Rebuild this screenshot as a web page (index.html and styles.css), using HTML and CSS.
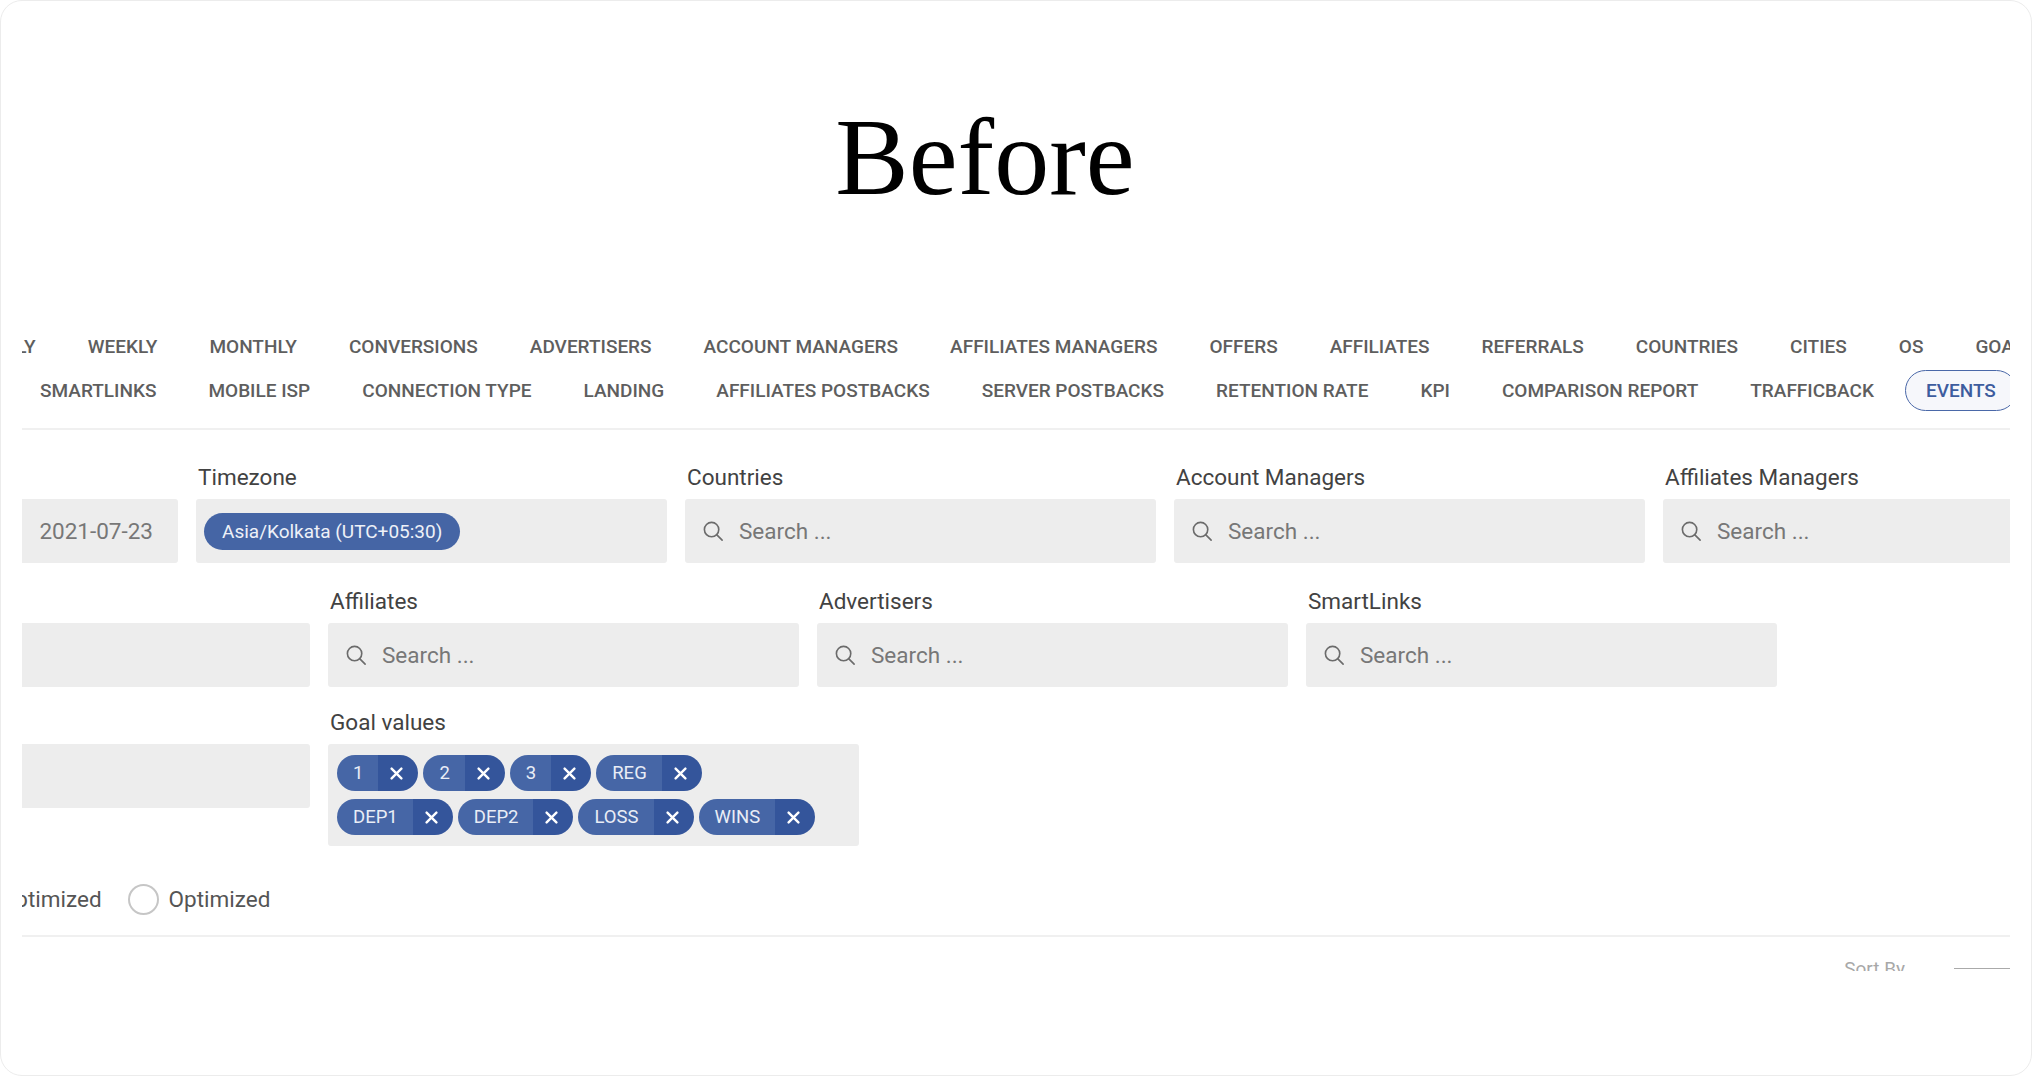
FILE: index.html
```html
<!DOCTYPE html>
<html lang="en">
<head>
<meta charset="utf-8">
<title>Before</title>
<link rel="stylesheet" href="styles.css">
</head>
<body>
<div class="card">
  <h1 class="title">Before</h1>
  <div class="shot">
    <nav class="tabs">
      <div class="tab-row tab-row-1">
        <span class="tab">DAILY</span>
        <span class="tab">WEEKLY</span>
        <span class="tab">MONTHLY</span>
        <span class="tab">CONVERSIONS</span>
        <span class="tab">ADVERTISERS</span>
        <span class="tab">ACCOUNT MANAGERS</span>
        <span class="tab">AFFILIATES MANAGERS</span>
        <span class="tab">OFFERS</span>
        <span class="tab">AFFILIATES</span>
        <span class="tab">REFERRALS</span>
        <span class="tab">COUNTRIES</span>
        <span class="tab">CITIES</span>
        <span class="tab">OS</span>
        <span class="tab">GOALS</span>
      </div>
      <div class="tab-row tab-row-2">
        <span class="tab">SMARTLINKS</span>
        <span class="tab">MOBILE ISP</span>
        <span class="tab">CONNECTION TYPE</span>
        <span class="tab">LANDING</span>
        <span class="tab">AFFILIATES POSTBACKS</span>
        <span class="tab">SERVER POSTBACKS</span>
        <span class="tab">RETENTION RATE</span>
        <span class="tab">KPI</span>
        <span class="tab">COMPARISON REPORT</span>
        <span class="tab">TRAFFICBACK</span>
        <span class="tab tab-active">EVENTS</span>
      </div>
    </nav>
    <div class="divider"></div>
    <div class="fields">
      <div class="field-row field-row-1">
        <div class="field">
          <div class="label">Date</div>
          <div class="box box-date">2021-07-23</div>
        </div>
        <div class="field">
          <div class="label">Timezone</div>
          <div class="box box-chip"><span class="tz-chip">Asia/Kolkata (UTC+05:30)</span></div>
        </div>
        <div class="field">
          <div class="label">Countries</div>
          <div class="box"><svg class="search-ico" viewBox="0 0 24 24"><circle cx="10" cy="10" r="7.5"/><line x1="15.5" y1="15.5" x2="21" y2="21"/></svg><span class="ph">Search ...</span></div>
        </div>
        <div class="field">
          <div class="label">Account Managers</div>
          <div class="box"><svg class="search-ico" viewBox="0 0 24 24"><circle cx="10" cy="10" r="7.5"/><line x1="15.5" y1="15.5" x2="21" y2="21"/></svg><span class="ph">Search ...</span></div>
        </div>
        <div class="field">
          <div class="label">Affiliates Managers</div>
          <div class="box"><svg class="search-ico" viewBox="0 0 24 24"><circle cx="10" cy="10" r="7.5"/><line x1="15.5" y1="15.5" x2="21" y2="21"/></svg><span class="ph">Search ...</span></div>
        </div>
      </div>
      <div class="field-row field-row-2">
        <div class="field">
          <div class="label">Offers</div>
          <div class="box"></div>
        </div>
        <div class="field">
          <div class="label">Affiliates</div>
          <div class="box"><svg class="search-ico" viewBox="0 0 24 24"><circle cx="10" cy="10" r="7.5"/><line x1="15.5" y1="15.5" x2="21" y2="21"/></svg><span class="ph">Search ...</span></div>
        </div>
        <div class="field">
          <div class="label">Advertisers</div>
          <div class="box"><svg class="search-ico" viewBox="0 0 24 24"><circle cx="10" cy="10" r="7.5"/><line x1="15.5" y1="15.5" x2="21" y2="21"/></svg><span class="ph">Search ...</span></div>
        </div>
        <div class="field">
          <div class="label">SmartLinks</div>
          <div class="box"><svg class="search-ico" viewBox="0 0 24 24"><circle cx="10" cy="10" r="7.5"/><line x1="15.5" y1="15.5" x2="21" y2="21"/></svg><span class="ph">Search ...</span></div>
        </div>
      </div>
      <div class="field-row field-row-3">
        <div class="field">
          <div class="label">Goals</div>
          <div class="box"></div>
        </div>
        <div class="field field-wide">
          <div class="label">Goal values</div>
          <div class="box box-goals">
            <div class="chip-line">
              <span class="chip"><span class="chip-text">1</span><span class="chip-x"><svg viewBox="0 0 12 12"><path d="M1.5 1.5 L10.5 10.5 M10.5 1.5 L1.5 10.5"/></svg></span></span>
              <span class="chip"><span class="chip-text">2</span><span class="chip-x"><svg viewBox="0 0 12 12"><path d="M1.5 1.5 L10.5 10.5 M10.5 1.5 L1.5 10.5"/></svg></span></span>
              <span class="chip"><span class="chip-text">3</span><span class="chip-x"><svg viewBox="0 0 12 12"><path d="M1.5 1.5 L10.5 10.5 M10.5 1.5 L1.5 10.5"/></svg></span></span>
              <span class="chip"><span class="chip-text">REG</span><span class="chip-x"><svg viewBox="0 0 12 12"><path d="M1.5 1.5 L10.5 10.5 M10.5 1.5 L1.5 10.5"/></svg></span></span>
            </div>
            <div class="chip-line">
              <span class="chip"><span class="chip-text">DEP1</span><span class="chip-x"><svg viewBox="0 0 12 12"><path d="M1.5 1.5 L10.5 10.5 M10.5 1.5 L1.5 10.5"/></svg></span></span>
              <span class="chip"><span class="chip-text">DEP2</span><span class="chip-x"><svg viewBox="0 0 12 12"><path d="M1.5 1.5 L10.5 10.5 M10.5 1.5 L1.5 10.5"/></svg></span></span>
              <span class="chip"><span class="chip-text">LOSS</span><span class="chip-x"><svg viewBox="0 0 12 12"><path d="M1.5 1.5 L10.5 10.5 M10.5 1.5 L1.5 10.5"/></svg></span></span>
              <span class="chip"><span class="chip-text">WINS</span><span class="chip-x"><svg viewBox="0 0 12 12"><path d="M1.5 1.5 L10.5 10.5 M10.5 1.5 L1.5 10.5"/></svg></span></span>
            </div>
          </div>
        </div>
      </div>
    </div>
    <div class="radio-row">
      <label class="radio-opt"><span class="radio"></span><span>Not Optimized</span></label>
      <label class="radio-opt"><span class="radio"></span><span>Optimized</span></label>
    </div>
    <div class="divider divider-2"></div>
    <div class="sort-row">
      <span class="sort-label">Sort By</span>
      <span class="sort-select"></span>
    </div>
  </div>
</div>
</body>
</html>
```
FILE: styles.css
```css
html, body {
  margin: 0;
  padding: 0;
  background: #ffffff;
}

.card {
  box-sizing: border-box;
  width: 2032px;
  height: 1076px;
  border: 1px solid #ececec;
  border-radius: 22px;
  padding: 0 21px;
  overflow: hidden;
  background: #ffffff;
}

.title {
  margin: 0;
  padding: 101px 62px 0 0;
  font-family: "Liberation Serif", "DejaVu Serif", serif;
  font-weight: normal;
  font-size: 110px;
  line-height: 110px;
  text-align: center;
  color: #000000;
}

.shot {
  margin-top: 112px;
  height: 647px;
  overflow: hidden;
  font-family: Roboto, "Liberation Sans", sans-serif;
}

/* tabs */
.tab-row {
  display: flex;
  flex-wrap: nowrap;
  align-items: center;
  gap: 10px;
  height: 44px;
}

.tab-row-1 { margin-left: -57px; }
.tab-row-2 { margin-left: -3px; }

.tab {
  flex-shrink: 0;
  box-sizing: border-box;
  height: 41px;
  line-height: 39px;
  padding: 0 20px;
  border: 1px solid transparent;
  border-radius: 21px;
  font-size: 19px;
  font-weight: 500;
  color: #5e5e5e;
  white-space: nowrap;
}

.tab-active {
  border: 1.5px solid #4a68a8;
  background: #f6f7fb;
  color: #3d5c9e;
}

.divider {
  height: 2px;
  background: #f0f0f0;
  margin-top: 16px;
}

/* fields */
.fields {
  display: flex;
  flex-direction: column;
  margin-top: 34px;
}

.field-row {
  display: flex;
  flex-wrap: nowrap;
  align-items: flex-start;
  gap: 18px;
}

.field-row-1 { margin-left: -315px; }
.field-row-2 { margin: 25px 0 0 -183px; }
.field-row-3 { margin: 22px 0 0 -183px; }

.field {
  flex-shrink: 0;
  width: 471px;
}

.field-wide { width: 531px; }

.label {
  font-size: 22.5px;
  line-height: 26px;
  color: #424242;
  margin: 0 0 9px 2px;
  white-space: nowrap;
}

.box {
  box-sizing: border-box;
  height: 64px;
  background: #ededed;
  border-radius: 3px;
  display: flex;
  align-items: center;
  gap: 14px;
  padding-left: 17px;
  font-size: 22.5px;
  color: #777777;
}

.box-date {
  justify-content: flex-end;
  padding-right: 25px;
}

.box-chip { padding-left: 8px; }

.tz-chip {
  height: 37px;
  line-height: 37px;
  padding: 0 18px;
  border-radius: 19px;
  background: #4565a5;
  color: #eef1f8;
  font-size: 19px;
  white-space: nowrap;
}

.search-ico {
  width: 23px;
  height: 23px;
  fill: none;
  stroke: #6b6b6b;
  stroke-width: 1.7;
  stroke-linecap: round;
  flex-shrink: 0;
}

.ph { white-space: nowrap; }

.box-goals {
  height: auto;
  display: flex;
  flex-direction: column;
  align-items: flex-start;
  gap: 8px;
  padding: 11px 9px;
}

.chip-line {
  display: flex;
  gap: 5px;
}

.chip {
  display: flex;
  height: 36px;
  border-radius: 18px;
  overflow: hidden;
  font-size: 18.5px;
  color: #e9edf6;
}

.chip-text {
  background: #4666a6;
  line-height: 36px;
  padding: 0 15px 0 16px;
}

.chip-x {
  width: 40px;
  background: #34559b;
  display: flex;
  align-items: center;
  justify-content: center;
}

.chip-x svg {
  width: 13px;
  height: 13px;
  fill: none;
  stroke: #ffffff;
  stroke-width: 2.2;
  stroke-linecap: round;
  margin-right: 3px;
}

/* radios */
.radio-row {
  display: flex;
  align-items: center;
  gap: 26px;
  height: 32px;
  margin: 37px 0 0 -105px;
}

.radio-opt {
  display: flex;
  align-items: center;
  gap: 10px;
  font-size: 22.5px;
  color: #555555;
  white-space: nowrap;
}

.radio {
  box-sizing: border-box;
  width: 31px;
  height: 31px;
  border: 2px solid #c6c6c6;
  border-radius: 50%;
  background: #ffffff;
}

.divider-2 { margin-top: 20px; }

.sort-row {
  display: flex;
  justify-content: flex-end;
  align-items: flex-start;
  margin-top: 21px;
}

.sort-label {
  font-size: 19px;
  line-height: 22px;
  color: #a8a8a8;
}

.sort-select {
  width: 56px;
  margin: 10px 0 0 49px;
  border-top: 1px solid #aaaaaa;
}
```
